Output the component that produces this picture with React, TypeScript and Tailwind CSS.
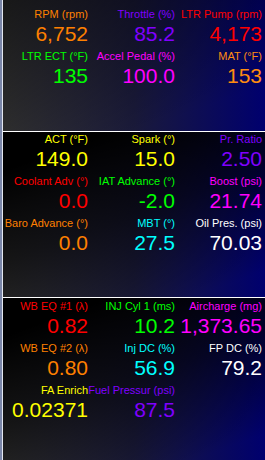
import React from "react";

type Cell = { label: string; value: string; color: string } | null;

const panel1: Cell[][] = [
  [
    { label: "RPM (rpm)", value: "6,752", color: "text-[#ff8000]" },
    { label: "Throttle (%)", value: "85.2", color: "text-[#8000ff]" },
    { label: "LTR Pump (rpm)", value: "4,173", color: "text-[#ff0000]" },
  ],
  [
    { label: "LTR ECT (°F)", value: "135", color: "text-[#00ff00]" },
    { label: "Accel Pedal (%)", value: "100.0", color: "text-[#ff00ff]" },
    { label: "MAT (°F)", value: "153", color: "text-[#ff8c10]" },
  ],
];

const panel2: Cell[][] = [
  [
    { label: "ACT (°F)", value: "149.0", color: "text-[#ffff00]" },
    { label: "Spark (°)", value: "15.0", color: "text-[#ffff00]" },
    { label: "Pr. Ratio", value: "2.50", color: "text-[#8000ff]" },
  ],
  [
    { label: "Coolant Adv (°)", value: "0.0", color: "text-[#ff0000]" },
    { label: "IAT Advance (°)", value: "-2.0", color: "text-[#00ff00]" },
    { label: "Boost (psi)", value: "21.74", color: "text-[#ff00ff]" },
  ],
  [
    { label: "Baro Advance (°)", value: "0.0", color: "text-[#ff8000]" },
    { label: "MBT (°)", value: "27.5", color: "text-[#00ffff]" },
    { label: "Oil Pres. (psi)", value: "70.03", color: "text-[#ffffff]" },
  ],
];

const panel3: Cell[][] = [
  [
    { label: "WB EQ #1 (λ)", value: "0.82", color: "text-[#ff0000]" },
    { label: "INJ Cyl 1 (ms)", value: "10.2", color: "text-[#00ff00]" },
    { label: "Aircharge (mg)", value: "1,373.65", color: "text-[#ff00ff]" },
  ],
  [
    { label: "WB EQ #2 (λ)", value: "0.80", color: "text-[#ff8000]" },
    { label: "Inj DC (%)", value: "56.9", color: "text-[#00ffff]" },
    { label: "FP DC (%)", value: "79.2", color: "text-[#ffffff]" },
  ],
  [
    { label: "FA Enrich", value: "0.02371", color: "text-[#ffff00]" },
    { label: "Fuel Pressur (psi)", value: "87.5", color: "text-[#8000ff]" },
    null,
  ],
];

function Gauge({ cell }: { cell: Cell }) {
  if (!cell) return <div />;
  return (
    <div className={`flex flex-col items-end pr-[2px] ${cell.color}`}>
      <div className="flex justify-end w-full">
        <span className="whitespace-nowrap text-[11px] leading-[14px]">{cell.label}</span>
      </div>
      <div className="flex justify-end w-full">
        <span className="whitespace-nowrap text-[21px] leading-[26px]">{cell.value}</span>
      </div>
    </div>
  );
}

function Panel({ rows, className }: { rows: Cell[][]; className: string }) {
  return (
    <div className={`flex flex-col gap-[2px] ${className}`}>
      {rows.map((r, i) => (
        <div key={i} className="grid grid-cols-[87px_87px_87px]">
          {r.map((c, j) => (
            <Gauge key={j} cell={c} />
          ))}
        </div>
      ))}
    </div>
  );
}

export default function App() {
  return (
    <div
      className="flex w-[265px] h-[460px] overflow-hidden bg-black"
      style={{ fontFamily: '"Liberation Sans", Arial, sans-serif' }}
    >
      <div className="w-[2px] h-full bg-[#7a86a8]" />
      <div className="w-[1px] h-full bg-[#e4e8f0]" />
      <div className="flex flex-col flex-1">
        <Panel
          rows={panel1}
          className="h-[131px] pt-[7px] bg-[linear-gradient(160deg,rgba(0,0,0,0.55)_0%,rgba(0,0,0,0.25)_45%,transparent_80%),linear-gradient(to_right,#363636_0%,#1a1a3a_50%,#00006e_100%)]"
        />
        <div className="h-[1px] bg-white" />
        <Panel
          rows={panel2}
          className="h-[165px] pt-0 bg-[linear-gradient(160deg,#000_15%,rgba(0,0,0,0.6)_50%,transparent_90%),linear-gradient(to_right,#363636_0%,#1a1a3a_50%,#00006e_100%)]"
        />
        <div className="h-[1px] bg-white" />
        <Panel
          rows={panel3}
          className="flex-1 pt-[1px] bg-[linear-gradient(160deg,#000_15%,rgba(0,0,0,0.6)_50%,transparent_90%),linear-gradient(to_right,#363636_0%,#1a1a3a_50%,#00006e_100%)]"
        />
      </div>
    </div>
  );
}
